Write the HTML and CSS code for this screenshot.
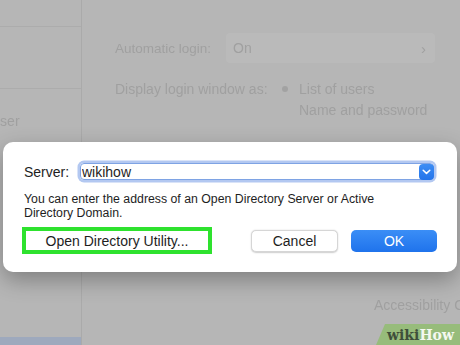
FILE: index.html
```html
<!DOCTYPE html>
<html lang="en">
<head>
    <meta charset="UTF-8">
    <meta name="viewport" content="width=device-width, initial-scale=1.0">
    <title>Login Options - Network Account Server</title>
    <link rel="stylesheet" href="styles.css">
</head>
<body>
    <div class="screen">
        <div class="backdrop">
            <div class="sidebar">
                <div class="side-card"></div>
                <div class="side-user">User</div>
                <div class="side-selected"></div>
            </div>
            <div class="main">
                <div class="row">
                    <span class="label">Automatic login:</span>
                    <div class="popup">
                        <span>On</span>
                        <span class="popup-arrow">&#8250;</span>
                    </div>
                </div>
                <div class="radio-row first">
                    <span class="label wide">Display login window as:</span>
                    <span class="dot"></span>
                    <span>List of users</span>
                </div>
                <div class="radio-row">
                    <span class="label wide"></span>
                    <span class="dot empty"></span>
                    <span>Name and password</span>
                </div>
                <div class="access">Accessibility Options...</div>
            </div>
        </div>

        <div class="dialog">
            <div class="server-row">
                <label class="server-label" for="server">Server:</label>
                <div class="combo">
                    <input class="combo-input" id="server" type="text" value="wikihow">
                    <span class="combo-btn">
                        <svg width="9" height="6" viewBox="0 0 9 6">
                            <path d="M1.2 1.2 L4.5 4.4 L7.8 1.2" fill="none" stroke="#fff" stroke-width="1.5" stroke-linecap="round" stroke-linejoin="round"/>
                        </svg>
                    </span>
                </div>
            </div>
            <p class="hint">You can enter the address of an Open Directory Server or Active Directory Domain.</p>
            <div class="actions">
                <div class="highlight">
                    <button class="btn btn-utility">Open Directory Utility...</button>
                </div>
                <div class="spacer"></div>
                <button class="btn btn-cancel">Cancel</button>
                <button class="btn btn-ok">OK</button>
            </div>
        </div>

        <div class="badge"><span class="badge-wiki">wiki</span><span class="badge-how">How</span></div>
    </div>
</body>
</html>
```

FILE: styles.css
```css
body {
    margin: 0;
    padding: 0;
    font-family: 'Liberation Sans', Arial, sans-serif;
    background-color: #b6b6b6;
}
.screen {
    position: relative;
    width: 460px;
    height: 345px;
    overflow: hidden;
    background-color: #b6b6b6;
}
.backdrop {
    display: flex;
    height: 345px;
    color: #a0a0a0;
    filter: blur(0.5px);
}
.sidebar {
    position: relative;
    width: 81px;
    flex-shrink: 0;
    border-right: 1px solid #aaaaaa;
    display: flex;
    flex-direction: column;
}
.side-card {
    margin-top: 26px;
    height: 61px;
    border-top: 1px solid #acacac;
    border-bottom: 1px solid #acacac;
}
.side-user {
    margin-top: 23px;
    margin-left: -10px;
    font-size: 14px;
    line-height: 18px;
}
.side-selected {
    margin-top: auto;
    height: 8px;
    background-color: #9ea9bd;
}
.main {
    flex: 1;
    display: flex;
    flex-direction: column;
    padding: 33px 0 0 33px;
    font-size: 13.5px;
    white-space: nowrap;
}
.row {
    display: flex;
    align-items: center;
    height: 30px;
}
.label {
    width: 111px;
    flex-shrink: 0;
}
.label.wide {
    width: 167px;
}
.popup {
    display: flex;
    align-items: center;
    justify-content: space-between;
    width: 193px;
    height: 30px;
    padding: 0 9px 0 7px;
    background-color: #bababa;
    border-radius: 4px;
    font-size: 14px;
}
.popup-arrow {
    font-size: 15px;
}
.radio-row {
    display: flex;
    align-items: center;
    height: 21px;
    font-size: 14px;
}
.radio-row.first {
    margin-top: 15px;
}
.dot {
    width: 6px;
    height: 6px;
    margin-right: 11px;
    border-radius: 50%;
    background-color: #a2a2a2;
}
.dot.empty {
    background-color: transparent;
}
.access {
    margin: auto 0 31px 259px;
    font-size: 14px;
    line-height: 18px;
}

.dialog {
    position: absolute;
    left: 3px;
    top: 142px;
    width: 454px;
    height: 130px;
    box-sizing: border-box;
    padding: 19px 20px 0 21px;
    background-color: #ffffff;
    border-radius: 10px;
    box-shadow: 0 8px 22px rgba(0, 0, 0, 0.3);
    color: #1e1e1e;
}
.server-row {
    display: flex;
    align-items: center;
    height: 21px;
}
.server-label {
    width: 53px;
    font-size: 14px;
}
.combo {
    position: relative;
    display: flex;
    align-items: center;
    flex: 1;
    height: 15px;
    margin: 0 3px;
    border: 1px solid #7ea3e4;
    border-radius: 4px;
    box-shadow: 0 0 0 2.5px #b3c8f1;
}
.combo-input {
    flex: 1;
    min-width: 0;
    border: none;
    outline: none;
    padding: 0 0 0 1px;
    font-family: 'Liberation Sans', Arial, sans-serif;
    font-size: 14px;
    color: #1e1e1e;
    background: transparent;
}
.combo-btn {
    display: flex;
    align-items: center;
    justify-content: center;
    width: 15px;
    height: 16px;
    margin-right: -1px;
    border-radius: 4px;
    background: linear-gradient(#3d8df4, #2474ea);
}
.hint {
    max-width: 372px;
    margin: 10px 0 0 0;
    font-size: 12.3px;
    line-height: 14px;
}
.actions {
    display: flex;
    align-items: center;
    margin-top: 7px;
}
.highlight {
    margin-left: -2px;
    border: 4px solid #2ee22e;
    width: 182px;
    height: 19px;
    display: flex;
}
.spacer {
    flex: 1;
}
.btn {
    font-family: 'Liberation Sans', Arial, sans-serif;
    font-size: 14px;
    color: #1e1e1e;
    padding: 0;
    cursor: pointer;
}
.btn-utility {
    width: 100%;
    border: none;
    background-color: #ffffff;
}
.btn-cancel {
    width: 87px;
    height: 22px;
    margin-right: 13px;
    border: 0.5px solid #d6d6d6;
    border-radius: 5px;
    background-color: #ffffff;
    box-shadow: 0 0.5px 1.5px rgba(0, 0, 0, 0.2);
}
.btn-ok {
    width: 86px;
    height: 22px;
    border: none;
    border-radius: 5px;
    color: #ffffff;
    background: linear-gradient(#3b8ef6, #1f73ec);
}

.badge {
    position: absolute;
    right: 0;
    bottom: 0;
    width: 84px;
    height: 21px;
    padding-left: 11px;
    box-sizing: border-box;
    background-color: #97bc7b;
    border-top-left-radius: 8px;
    clip-path: polygon(9px 0, 100% 0, 100% 100%, 0 100%);
    font-family: 'DejaVu Serif', serif;
    font-weight: bold;
    font-size: 14px;
    line-height: 22px;
}
.badge-wiki {
    color: #3f4f3a;
}
.badge-how {
    color: #f4f8f0;
}
```
